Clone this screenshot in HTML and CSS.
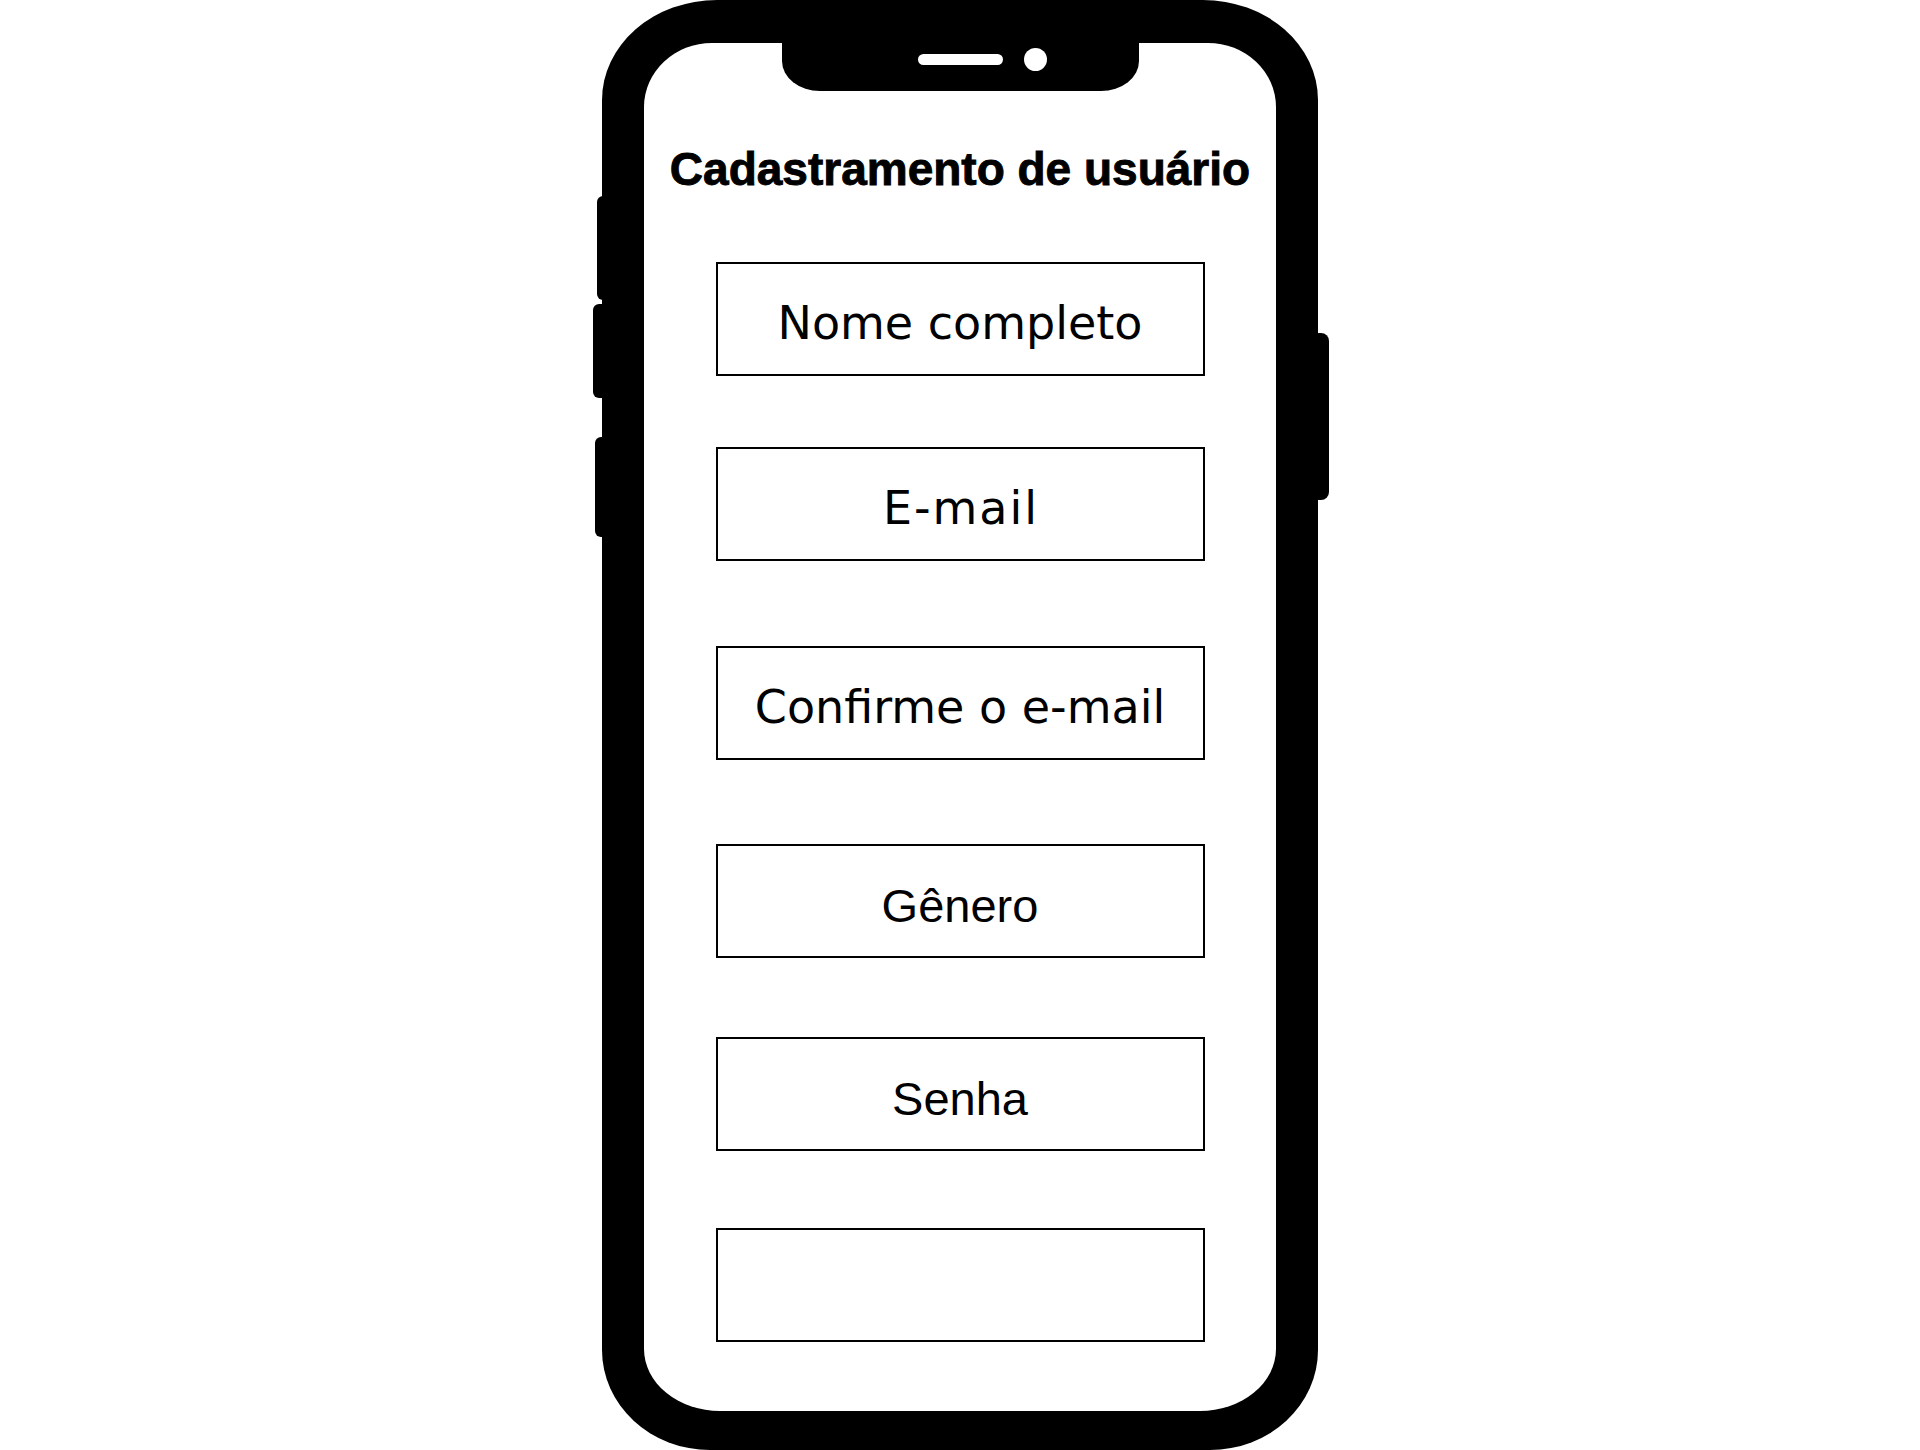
FILE: index.html
```html
<!DOCTYPE html>
<html lang="pt-BR">
<head>
<meta charset="utf-8">
<title>Cadastramento de usuário</title>
<link rel="stylesheet" href="styles.css">
</head>
<body>
<div class="stage">
  <div class="phone">
    <span class="side-btn btn-l1"></span>
    <span class="side-btn btn-l2"></span>
    <span class="side-btn btn-l3"></span>
    <span class="side-btn btn-r1"></span>
    <div class="screen">
      <div class="notch"><span class="speaker"></span><span class="camera"></span></div>
      <h1 class="title">Cadastramento de usuário</h1>
      <div class="fields">
        <div class="field">Nome completo</div>
        <div class="field field-spaced">E-mail</div>
        <div class="field">Confirme o e-mail</div>
        <div class="field field-plain">Gênero</div>
        <div class="field field-plain">Senha</div>
        <div class="field"></div>
      </div>
    </div>
  </div>
</div>
</body>
</html>
```
FILE: styles.css
```css
html, body {
  margin: 0;
  padding: 0;
  background: #fff;
}

.stage {
  display: flex;
  justify-content: center;
  height: 1450px;
  overflow: hidden;
}

.phone {
  position: relative;
  width: 716px;
  height: 1450px;
  box-sizing: border-box;
  padding: 43px 42px 39px 42px;
  background: #000;
  border-radius: 115px 115px 108px 108px / 100px 100px 100px 100px;
}

.side-btn {
  position: absolute;
  background: #000;
  border-radius: 6px;
}

.btn-l1 { left: -5px; top: 196px; width: 14px; height: 104px; }
.btn-l2 { left: -9px; top: 304px; width: 16px; height: 94px; }
.btn-l3 { left: -7px; top: 437px; width: 16px; height: 100px; }
.btn-r1 { right: -11px; top: 333px; width: 18px; height: 167px; border-radius: 8px; }

.screen {
  height: 100%;
  background: #fff;
  border-radius: 68px 68px 76px 76px / 64px 64px 62px 62px;
  display: flex;
  flex-direction: column;
  align-items: center;
}

.notch {
  width: 357px;
  height: 48px;
  box-sizing: border-box;
  background: #000;
  border-radius: 0 0 38px 38px / 0 0 30px 30px;
  display: flex;
  align-items: center;
  gap: 21px;
  padding: 0 0 16px 136px;
}

.speaker {
  width: 85px;
  height: 11px;
  border-radius: 6px;
  background: #fff;
}

.camera {
  width: 23px;
  height: 23px;
  border-radius: 50%;
  background: #fff;
}

.title {
  margin: 55px 0 0;
  font: 700 46px/1 "Liberation Sans", Arial, sans-serif;
  -webkit-text-stroke: 0.9px #000;
  color: #000;
}

.fields {
  margin-top: 70px;
  display: flex;
  flex-direction: column;
}

.field {
  width: 489px;
  height: 114px;
  box-sizing: border-box;
  border: 2px solid #000;
  display: flex;
  align-items: center;
  justify-content: center;
  padding-top: 8px;
  font: 400 46px/1 "DejaVu Sans", sans-serif;
  color: #000;
}

.field-spaced {
  letter-spacing: 2px;
  padding-left: 2px;
}

.field-plain {
  font: 400 47px/1 "Liberation Sans", Arial, sans-serif;
}

.field:nth-child(2) { margin-top: 71px; }
.field:nth-child(3) { margin-top: 85px; }
.field:nth-child(4) { margin-top: 84px; }
.field:nth-child(5) { margin-top: 79px; }
.field:nth-child(6) { margin-top: 77px; }
```
